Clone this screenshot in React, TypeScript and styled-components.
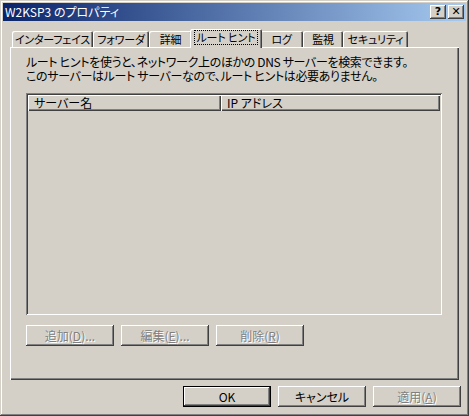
import React from 'react';
import styled, { createGlobalStyle, css } from 'styled-components';

const Global = createGlobalStyle`
  html, body { margin: 0; padding: 0; background: #D4D0C8; }
  body {
    font-family: "Noto Sans CJK JP", "Noto Sans", sans-serif;
    font-size: 12px;
    font-feature-settings: "palt";
    color: #000;
  }
`;

const Window = styled.div`
  box-sizing: border-box;
  width: 469px;
  height: 416px;
  background: #D4D0C8;
  padding: 3px;
  box-shadow: inset -1px -1px #404040, inset 1px 1px #D4D0C8,
    inset -2px -2px #808080, inset 2px 2px #ffffff;
  display: flex;
  flex-direction: column;
`;

const TitleBar = styled.div`
  height: 18px;
  flex: none;
  display: flex;
  align-items: center;
  padding: 0 2px 0 2px;
  background: linear-gradient(to right, #0A246A, #A6CAF0);
  color: #fff;
`;

const TitleText = styled.div`
  flex: 1;
  line-height: 18px;
  font-size: 12px;
  white-space: nowrap;
`;

const TitleButton = styled.div<{ $gap?: number }>`
  box-sizing: border-box;
  width: 16px;
  height: 14px;
  margin-left: ${p => p.$gap ?? 0}px;
  background: #D4D0C8;
  box-shadow: inset -1px -1px #404040, inset 1px 1px #ffffff,
    inset -2px -2px #808080;
  display: flex;
  align-items: center;
  justify-content: center;
  color: #000;
  font-family: "DejaVu Sans", sans-serif;
  font-weight: bold;
  font-size: 11px;
  line-height: 14px;
`;

const Body = styled.div`
  flex: 1;
  display: flex;
  flex-direction: column;
  padding: 8px 7px 6px 7px;
  min-height: 0;
`;

const TabStrip = styled.div`
  height: 18px;
  flex: none;
  display: flex;
  align-items: flex-end;
  padding-left: 2px;
  position: relative;
  z-index: 1;
`;

const Tab = styled.div<{ $w: number; $active?: boolean }>`
  box-sizing: border-box;
  width: ${p => p.$w}px;
  height: 16px;
  flex: none;
  display: flex;
  align-items: center;
  justify-content: center;
  white-space: nowrap;
  font-size: 11px;
  letter-spacing: -0.2px;
  background: #D4D0C8;
  border-top-left-radius: 2px;
  border-top-right-radius: 2px;
  box-shadow: inset 1px 1px #ffffff, inset -1px 0 #404040, inset -2px 0 #808080;
  padding-bottom: 1px;
  ${p =>
    p.$active &&
    css`
      width: ${p.$w + 4}px;
      height: 19px;
      margin: 0 -2px -1px -2px;
      position: relative;
      z-index: 2;
      padding-bottom: 3px;
    `}
`;

const FocusLabel = styled.span`
  outline: 1px dotted #000;
  outline-offset: 0px;
  padding: 0 2px;
  line-height: 13px;
`;

const Panel = styled.div`
  flex: 1;
  min-height: 0;
  box-sizing: border-box;
  display: flex;
  flex-direction: column;
  padding: 8px 16px 0 16px;
  box-shadow: inset 1px 1px #ffffff, inset -1px -1px #404040,
    inset -2px -2px #808080;
`;

const Description = styled.p`
  margin: 0;
  line-height: 14px;
  letter-spacing: -0.35px;
  white-space: nowrap;
`;

const ListBox = styled.div`
  box-sizing: border-box;
  width: 416px;
  height: 222px;
  margin-top: 10px;
  padding: 2px;
  box-shadow: inset 1px 1px #808080, inset -1px -1px #ffffff,
    inset 2px 2px #404040, inset -2px -2px #D4D0C8;
  display: flex;
  flex-direction: column;
`;

const HeaderRow = styled.div`
  display: flex;
  height: 16px;
  flex: none;
`;

const HeaderCell = styled.div<{ $w?: number }>`
  box-sizing: border-box;
  ${p => (p.$w ? `width: ${p.$w}px; flex: none;` : 'flex: 1;')}
  height: 16px;
  padding-left: 6px;
  line-height: 15px;
  white-space: nowrap;
  box-shadow: inset 1px 1px #ffffff, inset -1px -1px #404040,
    inset -2px -2px #808080;
`;

const ButtonRow = styled.div<{ $end?: boolean }>`
  display: flex;
  gap: 7px;
  flex: none;
  ${p =>
    p.$end
      ? css`
          justify-content: flex-end;
          margin-top: 6px;
          margin-right: -2px;
        `
      : css`
          margin-top: 10px;
        `}
`;

const Button = styled.div<{ $disabled?: boolean; $default?: boolean }>`
  box-sizing: border-box;
  width: 88px;
  height: 21px;
  display: flex;
  align-items: center;
  justify-content: center;
  white-space: nowrap;
  background: #D4D0C8;
  padding-bottom: 1px;
  box-shadow: inset -1px -1px #404040, inset 1px 1px #ffffff,
    inset -2px -2px #808080;
  ${p =>
    p.$default &&
    css`
      box-shadow: inset 0 0 0 1px #000, inset -2px -2px #404040,
        inset 2px 2px #ffffff, inset -3px -3px #808080;
    `}
  ${p =>
    p.$disabled &&
    css`
      color: #808080;
      text-shadow: 1px 1px 0 #ffffff;
    `}
`;

const Key = styled.span`
  text-decoration: underline;
`;

const tabs: { label: string; w: number; active?: boolean }[] = [
  { label: 'インターフェイス', w: 81 },
  { label: 'フォワーダ', w: 56 },
  { label: '詳細', w: 43 },
  { label: 'ルート ヒント', w: 68, active: true },
  { label: 'ログ', w: 43 },
  { label: '監視', w: 40 },
  { label: 'セキュリティ', w: 65 },
];

export default function App() {
  return (
    <>
      <Global />
      <Window>
        <TitleBar>
          <TitleText>W2KSP3 のプロパティ</TitleText>
          <TitleButton>?</TitleButton>
          <TitleButton $gap={2}>✕</TitleButton>
        </TitleBar>
        <Body>
          <TabStrip>
            {tabs.map(t => (
              <Tab key={t.label} $w={t.w} $active={t.active}>
                {t.active ? <FocusLabel>{t.label}</FocusLabel> : t.label}
              </Tab>
            ))}
          </TabStrip>
          <Panel>
            <Description>
              ルート ヒントを使うと、ネットワーク上のほかの DNS サーバーを検索できます。
            </Description>
            <Description>
              このサーバーはルート サーバーなので、ルート ヒントは必要ありません。
            </Description>
            <ListBox>
              <HeaderRow>
                <HeaderCell $w={193}>サーバー名</HeaderCell>
                <HeaderCell>IP アドレス</HeaderCell>
              </HeaderRow>
            </ListBox>
            <ButtonRow>
              <Button $disabled>
                追加(<Key>D</Key>)...
              </Button>
              <Button $disabled>
                編集(<Key>E</Key>)...
              </Button>
              <Button $disabled>
                削除(<Key>R</Key>)
              </Button>
            </ButtonRow>
          </Panel>
          <ButtonRow $end>
            <Button $default>OK</Button>
            <Button>キャンセル</Button>
            <Button $disabled>
              適用(<Key>A</Key>)
            </Button>
          </ButtonRow>
        </Body>
      </Window>
    </>
  );
}
